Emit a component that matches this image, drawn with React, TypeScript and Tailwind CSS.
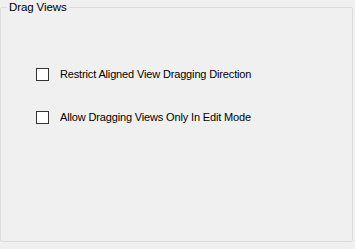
export default function App() {
  const options = [
    "Restrict Aligned View Dragging Direction",
    "Allow Dragging Views Only In Edit Mode",
  ];
  return (
    <div className="w-[355px] h-[249px] bg-[#f0f0f0] text-black font-['Liberation_Sans',sans-serif] text-[11px]">
      <fieldset className="w-[353px] h-[242px] border border-[#dcdcdc] rounded-[2px]">
        <legend className="ml-[6px] px-[2px] leading-[14px] text-[11.5px] tracking-[-0.1px]">Drag Views</legend>
        <div className="flex flex-col gap-[30px] pt-[54px] pl-[35px]">
          {options.map((label) => (
            <label key={label} className="flex items-center h-[13px]">
              <span className="w-[13px] h-[13px] border border-[#333333] bg-white shrink-0" />
              <span className="ml-[11px] leading-[13px] tracking-[-0.15px]">{label}</span>
            </label>
          ))}
        </div>
      </fieldset>
    </div>
  );
}
